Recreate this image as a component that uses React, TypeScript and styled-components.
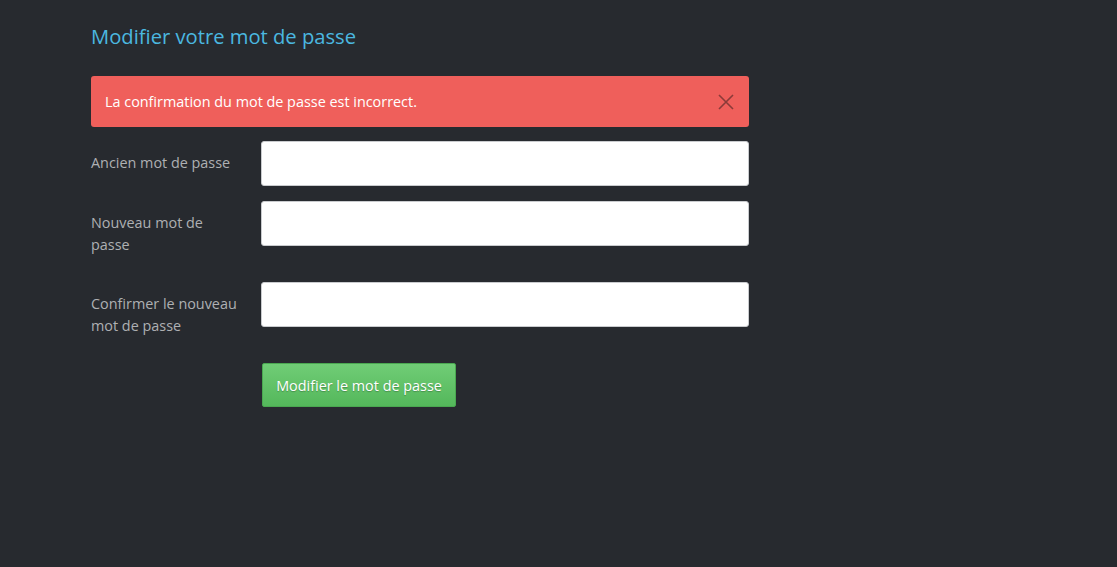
import React from "react";
import styled, { createGlobalStyle } from "styled-components";

const Global = createGlobalStyle`
  html, body { margin: 0; padding: 0; background: #272a2f; }
  body { font-family: "Open Sans", "Noto Sans", sans-serif; min-height: 567px; }
  * { box-sizing: border-box; }
`;

const Page = styled.div`
  padding: 22px 0 0 91px;
  width: 749px;
`;

const Title = styled.h2`
  margin: 0 0 26px;
  font-weight: 400;
  font-size: 20.2px;
  line-height: 28px;
  color: #4bb8e0;
`;

const Alert = styled.div`
  display: flex;
  align-items: center;
  justify-content: space-between;
  height: 51px;
  padding: 0 12px 0 14px;
  margin-bottom: 14px;
  background: #ef5f5b;
  border-radius: 3px;
  color: #fff;
  font-size: 14.4px;
`;

const Close = styled.button`
  display: flex;
  align-items: center;
  justify-content: center;
  width: 22px;
  height: 22px;
  padding: 0;
  border: 0;
  background: none;
  cursor: pointer;
`;

const Form = styled.form`
  display: flex;
  flex-direction: column;
  gap: 15px;
`;

const Row = styled.div`
  display: grid;
  grid-template-columns: 170px 1fr;
  align-items: start;
`;

const Label = styled.label`
  padding: 11px 20px 11px 0;
  font-size: 14.4px;
  line-height: 22px;
  color: #aeb0b3;
`;

const Input = styled.input`
  display: block;
  width: 100%;
  height: 45px;
  border: 1px solid #c9cbce;
  border-radius: 3px;
  background: #fff;
  font: inherit;
  padding: 0 12px;
  outline: none;
`;

const Submit = styled.button`
  margin-left: 171px;
  width: 194px;
  height: 44px;
  border: 1px solid #4aa851;
  border-radius: 2px;
  background: linear-gradient(#70cd76, #54b85b);
  color: #fff;
  font-family: inherit;
  font-size: 14.4px;
  text-shadow: 0 1px 1px rgba(0, 0, 0, 0.25);
  align-self: flex-start;
  cursor: pointer;
`;

export default function App() {
  return (
    <>
      <Global />
      <Page>
        <Title>Modifier votre mot de passe</Title>
        <Alert>
          <span>La confirmation du mot de passe est incorrect.</span>
          <Close aria-label="Fermer">
            <svg width="16" height="16" viewBox="0 0 16 16">
              <path d="M1 1 L15 15 M15 1 L1 15" stroke="#8b3b39" strokeWidth="1.6" fill="none" />
            </svg>
          </Close>
        </Alert>
        <Form onSubmit={(e) => e.preventDefault()}>
          <Row>
            <Label>Ancien mot de passe</Label>
            <Input type="password" />
          </Row>
          <Row>
            <Label>Nouveau mot de passe</Label>
            <Input type="password" />
          </Row>
          <Row>
            <Label>Confirmer le nouveau mot de passe</Label>
            <Input type="password" />
          </Row>
          <Submit type="submit">Modifier le mot de passe</Submit>
        </Form>
      </Page>
    </>
  );
}
